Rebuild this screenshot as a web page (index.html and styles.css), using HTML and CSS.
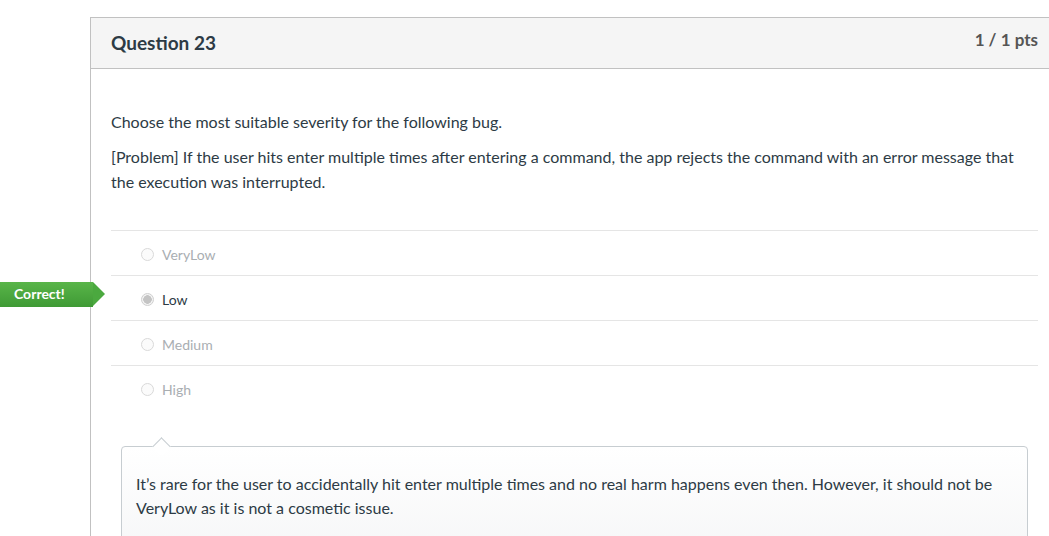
FILE: index.html
```html
<!DOCTYPE html>
<html>
<head>
<meta charset="utf-8">
<link rel="stylesheet" href="styles.css">
</head>
<body>
<div class="page">
  <div class="question">
    <div class="q-header">
      <h2 class="q-title">Question 23</h2>
      <span class="q-pts">1 / 1 pts</span>
    </div>
    <div class="q-body">
      <p class="q-text">Choose the most suitable severity for the following bug.</p>
      <p class="q-text">[Problem] If the user hits enter multiple times after entering a command, the app rejects the command with an error message that the execution was interrupted.</p>
      <div class="answers">
        <div class="answer"><span class="radio"></span><span class="label">VeryLow</span></div>
        <div class="answer selected">
          <span class="tag">Correct!</span>
          <span class="radio"></span><span class="label">Low</span>
        </div>
        <div class="answer"><span class="radio"></span><span class="label">Medium</span></div>
        <div class="answer"><span class="radio"></span><span class="label">High</span></div>
      </div>
      <div class="comment">
        <p>It’s rare for the user to accidentally hit enter multiple times and no real harm happens even then. However, it should not be VeryLow as it is not a cosmetic issue.</p>
      </div>
    </div>
  </div>
</div>
</body>
</html>
```
FILE: styles.css
```css
html, body {
  margin: 0;
  padding: 0;
  background: #fff;
  overflow: hidden;
}
body {
  font-family: Lato, "Open Sans", sans-serif;
  color: #2d3b45;
}
.page {
  padding: 17px 0 0 90px;
  width: 1100px;
  height: 519px;
}
.question {
  width: 967px;
  height: 100%;
  border: 1px solid #c1c1c1;
  border-bottom: none;
}
.q-header {
  background: #f5f5f5;
  border-bottom: 1px solid #c1c1c1;
  height: 50px;
  padding: 0 20px;
  display: flex;
  justify-content: space-between;
  align-items: flex-start;
}
.q-title {
  margin: 13px 0 0;
  font-size: 19px;
  font-weight: 700;
  color: #2d3b45;
  line-height: 24px;
}
.q-pts {
  margin-top: 12px;
  font-size: 17px;
  font-weight: 700;
  color: #555;
  line-height: 20px;
}
.q-body {
  padding: 40px 20px 0;
}
.q-text {
  margin: 0 0 10px;
  font-size: 16px;
  line-height: 25px;
  color: #2d3b45;
}
.answers {
  margin-top: 36px;
}
.answer {
  position: relative;
  height: 44px;
  box-sizing: border-box;
  height: 45px;
  padding-top: 2px;
  border-top: 1px solid #e5e5e5;
  display: flex;
  align-items: center;
  padding-left: 30px;
}
.radio {
  width: 11px;
  height: 11px;
  border: 1px solid #d9d9d9;
  border-radius: 50%;
  background: #fbfbfb;
  margin-right: 8px;
  box-sizing: content-box;
}
.label {
  font-size: 14px;
  color: #a9aeb2;
}
.selected .label {
  color: #2d3b45;
}
.selected .radio {
  background: radial-gradient(circle, #c4c4c4 0 4px, #f3f3f3 4.5px);
  border-color: #cfcfcf;
}
.tag {
  position: absolute;
  left: -111px;
  top: 6px;
  width: 93px;
  height: 25px;
  padding-left: 14px;
  box-sizing: border-box;
  background: linear-gradient(#59b549, #3f9a35);
  color: #fff;
  font-size: 14px;
  font-weight: 700;
  line-height: 24px;
}
.tag::after {
  content: "";
  position: absolute;
  right: -12px;
  top: 0;
  border-top: 12.5px solid transparent;
  border-bottom: 12.5px solid transparent;
  border-left: 12px solid #4ba93f;
}
.comment {
  position: relative;
  margin: 36px 10px 0;
  border: 1px solid #c7cdd1;
  border-radius: 4px;
  background: linear-gradient(#fff, #f3f4f5);
  padding: 25px 14px 14px;
  height: 100px;
}
.comment::before {
  content: "";
  position: absolute;
  left: 33px;
  top: -7px;
  width: 12px;
  height: 12px;
  background: #fff;
  border-top: 1px solid #c7cdd1;
  border-left: 1px solid #c7cdd1;
  transform: rotate(45deg);
}
.comment p {
  margin: 0;
  font-size: 16px;
  line-height: 24px;
  color: #2d3b45;
}
```
